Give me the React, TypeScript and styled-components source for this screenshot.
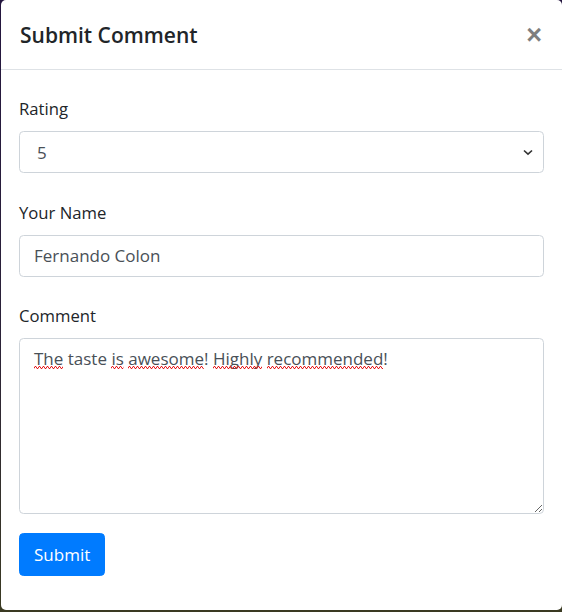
import React from "react";
import styled, { createGlobalStyle } from "styled-components";

const GlobalStyle = createGlobalStyle`
  html, body {
    margin: 0;
    height: 100%;
  }
  body {
    background: linear-gradient(180deg, #24163f 0%, #2b2238 55%, #3a3a22 100%);
    font-family: "Open Sans", "Noto Sans", sans-serif;
    overflow: hidden;
  }
`;

const Backdrop = styled.div`
  display: flex;
  padding-left: 1px;
  height: 612px;
  box-sizing: border-box;
`;

const Modal = styled.div`
  width: 561px;
  height: 610px;
  background: #fff;
  border-radius: 5px;
  display: flex;
  flex-direction: column;
`;

const Header = styled.div`
  height: 70px;
  box-sizing: border-box;
  display: flex;
  align-items: center;
  justify-content: space-between;
  padding: 3px 20px 0 19px;
  border-bottom: 1px solid #dee2e6;
`;

const Title = styled.h5`
  margin: 0;
  font-size: 21px;
  font-weight: 600;
  color: #212529;
  line-height: 1.5;
`;

const Close = styled.button`
  border: 0;
  background: transparent;
  padding: 0;
  font-family: "Liberation Sans", Arial, sans-serif;
  font-size: 27px;
  font-weight: 700;
  line-height: 1;
  color: #000;
  opacity: 0.5;
  cursor: pointer;
  margin-top: -1px;
`;

const Body = styled.form`
  padding: 25px 18px 0 18px;
  display: flex;
  flex-direction: column;
`;

const Group = styled.div`
  display: flex;
  flex-direction: column;
  margin-bottom: 25.5px;
`;

const Label = styled.label`
  font-size: 16.7px;
  line-height: 27px;
  color: #212529;
  margin-bottom: 9px;
`;

const SelectWrap = styled.div`
  position: relative;
`;

const Select = styled.select`
  width: 100%;
  height: 42px;
  box-sizing: border-box;
  appearance: none;
  border: 1px solid #ced4da;
  border-radius: 4.5px;
  background: #fff;
  padding: 0 40px 0 17px;
  font-family: inherit;
  font-size: 17px;
  color: #495057;
`;

const Chevron = styled.svg`
  position: absolute;
  right: 11px;
  top: 18px;
  pointer-events: none;
`;

const Input = styled.input`
  width: 100%;
  height: 42px;
  box-sizing: border-box;
  border: 1px solid #ced4da;
  border-radius: 4.5px;
  padding: 0 14px;
  font-family: inherit;
  font-size: 17px;
  color: #495057;
  outline: none;
`;

const CommentBox = styled.div`
  height: 176px;
  box-sizing: border-box;
  border: 1px solid #ced4da;
  border-radius: 4.5px;
  padding: 6px 14px;
  font-size: 17px;
  line-height: 27px;
  color: #495057;
  overflow: auto;
  resize: both;
  outline: none;
`;

const Word = styled.span`
  position: relative;
  display: inline-block;
`;

const Squiggle = styled.svg`
  position: absolute;
  left: 0;
  bottom: 3px;
  width: 100%;
  height: 3px;
  pointer-events: none;
`;

const Misspelled: React.FC<{ children: React.ReactNode }> = ({ children }) => (
  <Word>
    {children}
    <Squiggle contentEditable={false} aria-hidden="true">
      <rect width="100%" height="3" fill="url(#squiggle)" />
    </Squiggle>
  </Word>
);

const SubmitButton = styled.button`
  align-self: flex-start;
  margin-top: -6.5px;
  height: 43px;
  padding: 0 14px;
  border: 1px solid #007bff;
  border-radius: 4.5px;
  background: #007bff;
  color: #fff;
  font-family: inherit;
  font-size: 17px;
  cursor: pointer;
`;

const Defs = styled.svg`
  position: absolute;
  width: 0;
  height: 0;
`;

export default function App() {
  return (
    <>
      <GlobalStyle />
      <Defs aria-hidden="true">
        <defs>
          <pattern id="squiggle" width="4" height="3" patternUnits="userSpaceOnUse">
            <path d="M0 2.5 L1 0.5 L2 0.5 L3 2.5 L4 2.5" fill="none" stroke="#e5191b" strokeWidth="1" />
          </pattern>
        </defs>
      </Defs>
      <Backdrop>
        <Modal>
          <Header>
            <Title>Submit Comment</Title>
            <Close type="button" aria-label="Close">×</Close>
          </Header>
          <Body onSubmit={(e) => e.preventDefault()}>
            <Group>
              <Label htmlFor="rating">Rating</Label>
              <SelectWrap>
                <Select id="rating" defaultValue="5">
                  <option>1</option>
                  <option>2</option>
                  <option>3</option>
                  <option>4</option>
                  <option>5</option>
                </Select>
                <Chevron width="10" height="7" viewBox="0 0 10 7">
                  <path d="M1 1.5 L5 5.2 L9 1.5" fill="none" stroke="#333" strokeWidth="1.6" />
                </Chevron>
              </SelectWrap>
            </Group>
            <Group>
              <Label htmlFor="author">Your Name</Label>
              <Input id="author" defaultValue="Fernando Colon" />
            </Group>
            <Group>
              <Label>Comment</Label>
              <CommentBox role="textbox" aria-multiline="true" contentEditable suppressContentEditableWarning>
                <Misspelled>The</Misspelled> taste <Misspelled>is</Misspelled>{" "}
                <Misspelled>awesome</Misspelled>! <Misspelled>Highly</Misspelled>{" "}
                <Misspelled>recommended</Misspelled>!
              </CommentBox>
            </Group>
            <SubmitButton type="submit">Submit</SubmitButton>
          </Body>
        </Modal>
      </Backdrop>
    </>
  );
}
